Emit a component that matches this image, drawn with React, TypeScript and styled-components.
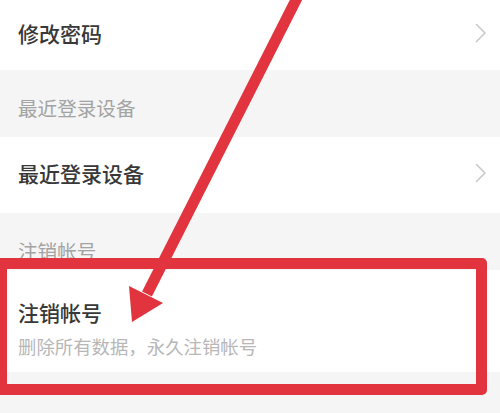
import React from "react";
import styled, { createGlobalStyle } from "styled-components";

const RED = "#e2343f";

const GlobalStyle = createGlobalStyle`
  html, body {
    margin: 0;
    padding: 0;
    background: #f5f5f5;
  }
  body {
    font-family: "Noto Sans CJK SC", "Noto Sans", sans-serif;
  }
`;

export default function App() {
  return (
    <>
      <GlobalStyle />
      <Screen>
        <Row $height={70}>
          <RowTitle>修改密码</RowTitle>
          <Chevron />
        </Row>
        <SectionHeader $height={67}>最近登录设备</SectionHeader>
        <Row $height={76}>
          <RowTitle>最近登录设备</RowTitle>
          <Chevron />
        </Row>
        <SectionHeader $height={57}>注销帐号</SectionHeader>
        <DetailRow>
          <RowTitle>注销帐号</RowTitle>
          <RowHint>删除所有数据，永久注销帐号</RowHint>
        </DetailRow>
        <Footer />

        <Highlight />
        <ArrowMark />
      </Screen>
    </>
  );
}

function Chevron() {
  return (
    <ChevronIcon width="12" height="20" viewBox="0 0 12 20" aria-hidden>
      <path
        d="M1.5 1.5 L10 10 L1.5 18.5"
        fill="none"
        stroke="#c9c9c9"
        strokeWidth="1.6"
        strokeLinecap="round"
        strokeLinejoin="round"
      />
    </ChevronIcon>
  );
}

// annotation arrow drawn over the list
function ArrowMark() {
  return (
    <ArrowSvg width="500" height="413" viewBox="0 0 500 413" aria-hidden>
      <line
        x1="299"
        y1="-6"
        x2="147"
        y2="294"
        stroke={RED}
        strokeWidth="11"
      />
      <polygon points="132,322 129,286 163,303" fill={RED} />
    </ArrowSvg>
  );
}

const Screen = styled.div`
  position: relative;
  width: 500px;
  height: 413px;
  overflow: hidden;
  display: flex;
  flex-direction: column;
  background: #f5f5f5;
`;

const Row = styled.div<{ $height: number }>`
  height: ${(p) => p.$height}px;
  flex-shrink: 0;
  box-sizing: border-box;
  display: flex;
  align-items: center;
  justify-content: space-between;
  padding: 0 13px 4px 18px;
  background: #ffffff;
`;

const RowTitle = styled.div`
  font-size: 21px;
  line-height: 28px;
  font-weight: 500;
  color: #383838;
`;

const RowHint = styled.div`
  font-size: 18.4px;
  line-height: 24px;
  color: #b7b7b7;
`;

const SectionHeader = styled.div<{ $height: number }>`
  height: ${(p) => p.$height}px;
  flex-shrink: 0;
  box-sizing: border-box;
  padding: 25px 18px 0;
  font-size: 19.6px;
  line-height: 26px;
  color: #a3a3a3;
  background: #f5f5f5;
`;

const DetailRow = styled.div`
  height: 102px;
  flex-shrink: 0;
  box-sizing: border-box;
  display: flex;
  flex-direction: column;
  gap: 8px;
  padding: 28px 18px 0;
  background: #ffffff;
`;

const Footer = styled.div`
  flex: 1;
  background: #f5f5f5;
`;

const ChevronIcon = styled.svg`
  display: block;
`;

const Highlight = styled.div`
  position: absolute;
  left: -4px;
  top: 258px;
  width: 491px;
  height: 137px;
  box-sizing: border-box;
  border: 11px solid ${RED};
  border-radius: 5px;
  pointer-events: none;
`;

const ArrowSvg = styled.svg`
  position: absolute;
  left: 0;
  top: 0;
  pointer-events: none;
`;
